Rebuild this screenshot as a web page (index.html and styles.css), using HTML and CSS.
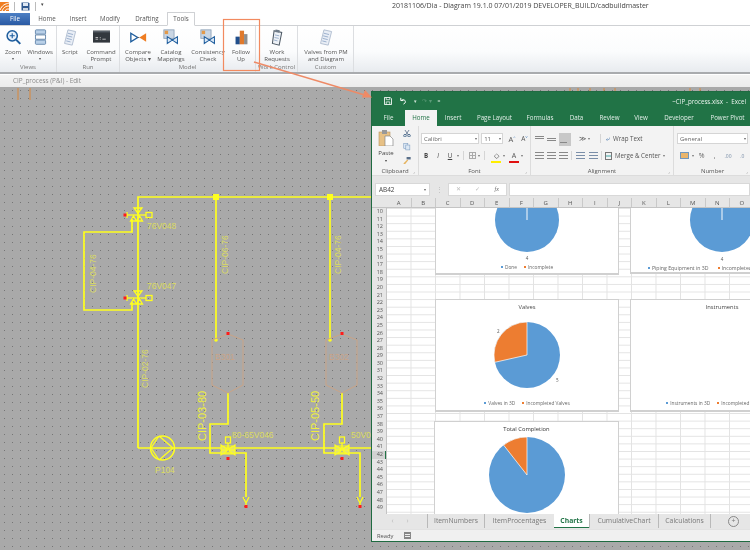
FILE: index.html
```html
<!DOCTYPE html>
<html lang="en">
<head>
<meta charset="utf-8">
<title>Diagram</title>
<link rel="stylesheet" href="styles.css">
</head>
<body>
<div class="app">
  <header class="chrome">
    <div class="titlebar">
      <div class="quick">
        <svg class="logo" viewBox="0 0 9 9"><rect width="9" height="9" fill="#ef7d22"/><path d="M0 8 C2 3 5 2 9 1 M2 9 C4 5 6 4 9 4 M5 9 C6 7 7 7 9 7" stroke="#fff" fill="none"/></svg>
        <span class="qsep"></span>
        <svg class="save" viewBox="0 0 9 9"><path d="M.5.5h7l1 1v7h-8z" fill="#31598f"/><rect x="2" y="1" width="5" height="3" fill="#dfe8f3"/><rect x="2" y="6" width="5" height="2.5" fill="#cdd6e2"/></svg>
        <span class="qsep"></span>
        <span class="qdrop">▾</span>
      </div>
      <div class="apptitle">20181106/Dia - Diagram 19.1.0 07/01/2019 DEVELOPER_BUILD/cadbuildmaster</div>
    </div>
    <nav class="tabs">
      <span class="tab file">File</span>
      <span class="tab t-home">Home</span>
      <span class="tab t-insert">Insert</span>
      <span class="tab t-modify">Modify</span>
      <span class="tab t-drafting">Drafting</span>
      <span class="tab t-tools">Tools</span>
    </nav>
    <div class="ribbon">
      <section class="group g-views">
        <div class="items">
          <div class="item w26"><svg class="ico" viewBox="0 0 20 20"><circle cx="8.5" cy="8" r="6" fill="#e8f1fb" stroke="#1f5e9e" stroke-width="1.8"/><path d="M13 12.5l5 5" stroke="#1f5e9e" stroke-width="2.4"/><path d="M5.5 8h6M8.5 5v6" stroke="#1f5e9e" stroke-width="1.3"/></svg><span>Zoom</span><i>▾</i></div>
          <div class="item w28"><svg class="ico" viewBox="0 0 20 20"><rect x="4" y="1" width="12" height="5" rx="1" fill="#b9d0e8" stroke="#5b7fa6"/><rect x="4" y="7" width="12" height="5" fill="#fff" stroke="#5b7fa6"/><rect x="4" y="13" width="12" height="5" rx="1" fill="#b9d0e8" stroke="#5b7fa6"/></svg><span>Windows</span><i>▾</i></div>
        </div>
        <div class="glabel">Views</div>
      </section>
      <section class="group g-run">
        <div class="items">
          <div class="item w26"><svg class="ico" viewBox="0 0 20 20"><path d="M7 1l9 2-4 16-9-2z" fill="#e9eef6" stroke="#aab8cc"/><path d="M7 5l6 1.500M6 8l6 1.500M5.500 11l6 1.500M5 14l5 1.200" stroke="#8fa6c6"/></svg><span>Script</span></div>
          <div class="item w36"><svg class="ico cmd" viewBox="0 0 20 20"><rect y="2" width="20" height="14" fill="#33383e"/><rect y="2" width="20" height="2" fill="#596068"/><path d="M3 10h3M3 12h3M8 10h1M8 12h1M11 12h4" stroke="#ddd" stroke-width=".9"/></svg><span>Command<br>Prompt</span></div>
        </div>
        <div class="glabel">Run</div>
      </section>
      <section class="group g-model">
        <div class="items">
          <div class="item w36"><svg class="ico" viewBox="0 0 20 20"><path d="M1 5l8 5-8 5z" fill="#fff" stroke="#1f5e9e" stroke-width="1.6"/><path d="M19 5l-8 5 8 5z" fill="#ef7d22"/><path d="M9 10h2" stroke="#555"/></svg><span>Compare<br>Objects ▾</span></div>
          <div class="item w30"><svg class="ico" viewBox="0 0 20 20"><rect x="1" y="1" width="12" height="10" fill="#c9d6e4" stroke="#8ea2b8"/><rect x="2" y="2" width="4" height="4" fill="#e39a4a"/><path d="M5 9l6 4-6 4zM17 9l-6 4 6 4z" fill="#dbe9f7" stroke="#1f5e9e" stroke-width="1.2"/></svg><span>Catalog<br>Mappings</span></div>
          <div class="item w44"><svg class="ico" viewBox="0 0 20 20"><rect x="1" y="1" width="12" height="10" fill="#c9d6e4" stroke="#8ea2b8"/><rect x="2" y="2" width="4" height="4" fill="#e39a4a"/><path d="M5 9l6 4-6 4zM17 9l-6 4 6 4z" fill="#dbe9f7" stroke="#1f5e9e" stroke-width="1.2"/></svg><span>Consistency<br>Check</span></div>
          <div class="item w22"><svg class="ico" viewBox="0 0 20 20"><rect x="3" y="9" width="5" height="9" fill="#1f4e8c"/><rect x="8" y="2" width="5" height="16" fill="#e0792b"/><rect x="13" y="6" width="4" height="12" fill="#8e8e8e"/></svg><span>Follow<br>Up</span></div>
        </div>
        <div class="glabel">Model</div>
      </section>
      <section class="group g-work">
        <div class="items">
          <div class="item w42"><svg class="ico" viewBox="0 0 20 20"><path d="M6 2l9 2-3 15-8-2z" fill="#eef2f7" stroke="#4d5965" stroke-width="1.2"/><rect x="7.500" y="1" width="5" height="3" fill="#6e7b88" transform="rotate(12 10 2)"/><path d="M7 7l5 1M6.500 10l5 1M6 13l4 1" stroke="#8fa6c6"/></svg><span>Work<br>Requests</span></div>
        </div>
        <div class="glabel">Work Control</div>
      </section>
      <section class="group g-custom">
        <div class="items">
          <div class="item w56"><svg class="ico" viewBox="0 0 20 20"><path d="M7 1l9 2-4 16-9-2z" fill="#e9eef6" stroke="#aab8cc"/><path d="M7 5l6 1.500M6 8l6 1.500M5.500 11l6 1.500M5 14l5 1.200" stroke="#8fa6c6"/></svg><span>Valves from PM<br>and Diagram</span></div>
        </div>
        <div class="glabel">Custom</div>
      </section>
    </div>
    <div class="docbar">CIP_process (P&amp;I) - Edit</div>
  </header>

  <main class="canvas">
    <svg class="diagram" viewBox="0 87 750 463" width="750" height="463">
      <defs>
        <pattern id="dots" x="4" y="2" width="8" height="8" patternUnits="userSpaceOnUse">
          <rect width="1" height="1" fill="#757575"/>
        </pattern>
        <g id="gatevalve" fill="none" stroke="#ffff1e" stroke-width="1.300">
          <path d="M-11 0H8" />
          <path d="M-11-3V3" />
          <rect x="8" y="-2.500" width="6" height="5"/>
          <path d="M-4-7H4L0-1.500Z"/>
          <path d="M-7.500 6H-1.500L-4.500 1ZM-1.500 6H4.500L1.500 1Z"/>
          <rect x="-14.500" y="-1.500" width="3" height="3" fill="#ff1a1a" stroke="none"/>
        </g>
        <g id="ctrlvalve">
          <rect x="-2.500" y="-13" width="5" height="6" fill="none" stroke="#ffff1e" stroke-width="1.300"/>
          <path d="M0-7V0" stroke="#ffff1e" stroke-width="1.300"/>
          <path d="M-7-5L-1-1V1L-7 5ZM7-5L1-1V1L7 5ZM-7 0H7M-5 4H5M-5-4H5" fill="#e4e46a" stroke="#ffff1e" stroke-width="1.200"/>
          <rect x="-1.500" y="7" width="3" height="3" fill="#ff1a1a"/>
        </g>
        <g id="drain">
          <path d="M-3 0L0 6L3 0M0 6V8" fill="none" stroke="#ffff1e" stroke-width="1.300"/>
          <rect x="-1.500" y="8" width="3" height="3" fill="#ff1a1a"/>
        </g>
        <g id="vessel">
          <path d="M0 0L15 6V51L0 59L-16 51V6Z" fill="none" stroke="#c9a487" stroke-width="1"/>
          <rect x="-1.500" y="-2" width="3" height="3" fill="#ff1a1a"/>
        </g>
      </defs>
      <rect x="0" y="87" width="750" height="463" fill="url(#dots)"/>
      <path class="mark" d="M18 88V100M30 88V100M570 88V91M578 88V91M590 88V91M604 88V91M615 88V91M690 88V91M700 88V91"/>
      <g class="pipe">
        <path d="M138 448V197H750"/>
        <path d="M216 197V340M330 197V340"/>
        <path d="M132 219V232H84V310H132V302"/>
        <path d="M138 448H371"/>
        <path d="M228 393V424H210V453H246V497"/>
        <path d="M342 393V424H324V453H360V497"/>
      </g>
      <rect class="node" x="213" y="194" width="6" height="6"/>
      <rect class="node" x="327" y="194" width="6" height="6"/>
      <circle class="node" cx="216" cy="340" r="1.800"/>
      <circle class="node" cx="330" cy="340" r="1.800"/>
      <use href="#gatevalve" x="138" y="215"/>
      <use href="#gatevalve" x="138" y="298"/>
      <use href="#vessel" x="228" y="334"/>
      <use href="#vessel" x="342" y="334"/>
      <circle cx="162.500" cy="448" r="12" fill="none" stroke="#ffff1e" stroke-width="1.500"/>
      <path d="M151 448L159 436M151 448L159 460M159 436L173 448L159 460" fill="none" stroke="#ffff1e" stroke-width="1.300"/>
      <use href="#ctrlvalve" x="228" y="450"/>
      <use href="#ctrlvalve" x="342" y="450"/>
      <use href="#drain" x="246" y="497"/>
      <use href="#drain" x="360" y="497"/>
      <text class="lbl" x="147" y="229">76V048</text>
      <text class="lbl" x="147" y="289">76V047</text>
      <text class="lbl" x="155" y="473">P104</text>
      <text class="lbl" x="232" y="438">80-65V046</text>
      <text class="lbl" x="351" y="438">50V0</text>
      <text class="lbl vessel-t" x="215" y="360">B301</text>
      <text class="lbl vessel-t" x="329" y="360">B302</text>
      <text class="lbl" transform="translate(96 293) rotate(-90)">CIP-04-76</text>
      <text class="lbl" transform="translate(228 274) rotate(-90)">CIP-06-76</text>
      <text class="lbl" transform="translate(148 388) rotate(-90)">CIP-02-76</text>
      <text class="lbl" transform="translate(341 274) rotate(-90)">CIP-04-76</text>
      <text class="lbl big" transform="translate(206 441) rotate(-90)">CIP-03-80</text>
      <text class="lbl big" transform="translate(319 441) rotate(-90)">CIP-05-50</text>
    </svg>
  </main>

  <div class="excel">
    <div class="xtitle">
      <div class="xquick">
        <svg class="xs" viewBox="0 0 9 9"><path d="M.5.5h6.500l1.500 1.500v6.500h-8z" fill="none" stroke="#fff"/><path d="M2.500 1v2h4V1M2.500 8.500V5.500h4v3" fill="none" stroke="#fff" stroke-width=".8"/></svg>
        <svg class="xs" viewBox="0 0 9 9"><path d="M2 1v3h3M2.500 4C4 2 8 3 7 6.500L5 8" fill="none" stroke="#fff" stroke-width="1.100"/></svg>
        <span class="dim">▾</span>
        <span class="ghost">↷ ▾</span>
        <span class="dim eq">=</span>
      </div>
      <div class="xname">~CIP_process.xlsx&nbsp; -&nbsp; Excel</div>
    </div>
    <nav class="xtabs">
      <span class="w34">File</span><span class="xactive w32">Home</span><span class="w32">Insert</span><span class="w50">Page Layout</span><span class="w40">Formulas</span><span class="w34">Data</span><span class="w34">Review</span><span class="w30">View</span><span class="w46">Developer</span><span class="w50">Power Pivot</span>
    </nav>
    <div class="xribbon">
      <section class="xg xg-clip">
        <div class="xbody clip">
          <div class="paste"><svg class="pasteico" viewBox="0 0 16 16"><rect x="1" y="2" width="11" height="14" fill="#e7c186" stroke="#b89460" stroke-width=".6"/><rect x="4" y="0" width="5" height="4" fill="#999"/><path d="M7 6h5l3 3v7H7z" fill="#fff" stroke="#888" stroke-width=".7"/></svg><span>Paste</span><i>▾</i></div>
          <div class="clipcol">
            <svg viewBox="0 0 9 9"><path d="M2 0l4 6M7 0L3 6" stroke="#5a6f8a" fill="none"/><circle cx="2" cy="7" r="1.600" fill="none" stroke="#33587f"/><circle cx="7" cy="7" r="1.600" fill="none" stroke="#33587f"/></svg>
            <svg viewBox="0 0 9 9"><rect x=".5" y=".5" width="5" height="6" fill="#dce8f4" stroke="#7d9cc0" stroke-width=".7"/><rect x="3" y="2.500" width="5" height="6" fill="#dce8f4" stroke="#7d9cc0" stroke-width=".7"/></svg>
            <svg viewBox="0 0 9 9"><rect x="4" y="0" width="5" height="3" fill="#5a6f8a"/><path d="M0 8l5-5 1 1-4 5z" fill="#e5b35e"/></svg>
          </div>
        </div>
        <div class="xlabel">Clipboard<b>⌟</b></div>
      </section>
      <section class="xg xg-font">
        <div class="xbody rows">
          <div class="xrow">
            <span class="select s-font">Calibri<i>▾</i></span><span class="select s-size">11<i>▾</i></span>
            <span class="big-a">A<sup>^</sup></span><span class="big-a small">A<sup>v</sup></span>
          </div>
          <div class="xrow r2">
            <b class="fmt">B</b><em class="fmt">I</em><u class="fmt">U</u><span class="tiny">▾</span><span class="vsep"></span><span class="gridico"></span><span class="tiny">▾</span><span class="vsep"></span>
            <span class="fillc">◇<span class="bar yellow"></span></span><span class="tiny">▾</span><span class="fontc">A<span class="bar red"></span></span><span class="tiny">▾</span>
          </div>
        </div>
        <div class="xlabel">Font<b>⌟</b></div>
      </section>
      <section class="xg xg-align">
        <div class="xbody rows">
          <div class="xrow">
            <span class="al a-top"></span><span class="al a-mid"></span><span class="al a-bot"></span>
            <span class="orient">≫</span><span class="tiny">▾</span><span class="vsep vs-wrap"></span>
            <span class="act"><span class="wrapico">⤶</span>Wrap Text</span>
          </div>
          <div class="xrow r2">
            <span class="al l-left"></span><span class="al l-center"></span><span class="al l-right"></span><span class="vsep vs-a"></span>
            <span class="al ind"></span><span class="al ind ind2"></span><span class="vsep vs-b"></span>
            <span class="act"><span class="mergeico"></span>Merge &amp; Center</span><span class="tiny">▾</span>
          </div>
        </div>
        <div class="xlabel">Alignment<b>⌟</b></div>
      </section>
      <section class="xg xg-num">
        <div class="xbody rows">
          <div class="xrow"><span class="select s-gen">General<i>▾</i></span></div>
          <div class="xrow r2 numrow"><span class="cur"></span><span class="tiny">▾</span><span class="pct">%</span><span class="pct">,</span><span class="dec">.00</span><span class="dec">.0</span></div>
        </div>
        <div class="xlabel">Number<b>⌟</b></div>
      </section>
    </div>
    <div class="fbar">
      <span class="namebox">AB42<i>▾</i></span>
      <span class="fgrip">⋮</span>
      <span class="fbtns"><i>✕</i><i>✓</i><i class="fx">fx</i></span>
      <span class="finput"></span>
    </div>
    <div class="colhead">
      <span class="corner"></span><span class="c">A</span><span class="c">B</span><span class="c">C</span><span class="c">D</span><span class="c">E</span><span class="c">F</span><span class="c">G</span><span class="c">H</span><span class="c">I</span><span class="c">J</span><span class="c">K</span><span class="c">L</span><span class="c">M</span><span class="c">N</span><span class="c">O</span>
    </div>
    <div class="sheet">
      <div class="rowhead">
        <span>10</span><span>11</span><span>12</span><span>13</span><span>14</span><span>15</span><span>16</span><span>17</span><span>18</span><span>19</span><span>20</span><span>21</span><span>22</span><span>23</span><span>24</span><span>25</span><span>26</span><span>27</span><span>28</span><span>29</span><span>30</span><span>31</span><span>32</span><span>33</span><span>34</span><span>35</span><span>36</span><span>37</span><span>38</span><span>39</span><span>40</span><span>41</span><span class="cur-row">42</span><span>43</span><span>44</span><span>45</span><span>46</span><span>47</span><span>48</span><span>49</span>
      </div>
      <div class="grid">
        <article class="chart ch1">
          <svg class="pie pie-clip" viewBox="-34 -34 68 68"><circle r="33" fill="#5b9bd5"/><path d="M0 0V-33" stroke="#fff"/></svg>
          <div class="val">4</div>
          <div class="legend"><span class="k kb">Done</span><span class="k ko">Incomplete</span></div>
        </article>
        <article class="chart ch2">
          <svg class="pie pie-clip" viewBox="-34 -34 68 68"><circle r="33" fill="#5b9bd5"/><path d="M0 0V-33" stroke="#fff"/></svg>
          <div class="val">4</div>
          <div class="legend"><span class="k kb">Piping Equipment in 3D</span><span class="k ko">Incompleted Piping Equipment</span></div>
        </article>
        <article class="chart ch3">
          <h3>Valves</h3>
          <svg class="pie3" viewBox="-91 -33 183 67"><circle r="33" fill="#5b9bd5"/><path d="M0 0L-32.200 7.300A33 33 0 0 1 0-33Z" fill="#ed7d31" stroke="#fff" stroke-width=".7"/><text class="dl" x="-30" y="-22.500">2</text><text class="dl" x="29" y="26.500">5</text></svg>
          <div class="legend"><span class="k kb">Valves in 3D</span><span class="k ko">Incompleted Valves</span></div>
        </article>
        <article class="chart ch4">
          <h3>Instruments</h3>
          <div class="spacer"></div>
          <div class="legend"><span class="k kb">Instruments in 3D</span><span class="k ko">Incompleted Instruments</span></div>
        </article>
        <article class="chart ch5">
          <h3 class="bold">Total Completion</h3>
          <svg class="pie5" viewBox="-39 -39 78 78"><circle r="38" fill="#5b9bd5"/><path d="M0 0L-23.400-29.900A38 38 0 0 1 0-38Z" fill="#ed7d31" stroke="#fff" stroke-width=".7"/></svg>
        </article>
      </div>
    </div>
    <div class="sheettabs">
      <span class="nav">‹</span><span class="nav">›</span>
      <span class="st w57">ItemNumbers</span><span class="st w70">ItemProcentages</span><span class="st active">Charts</span><span class="st w69">CumulativeChart</span><span class="st w53">Calculations</span>
      <span class="plus">+</span>
    </div>
    <footer class="status"><span>Ready</span><span class="macro"></span></footer>
  </div>

  <svg class="callout" viewBox="0 0 750 550" width="750" height="550">
    <rect x="223.500" y="19.500" width="36" height="51" fill="none" stroke="#f28a5f" stroke-width="1.200"/>
    <path d="M254 62L368 96" stroke="#ee8a66" stroke-width="1.500"/>
    <path d="M372 97.500L362 97.500L365 90Z" fill="#ee8a66"/>
  </svg>
</div>
</body>
</html>
```
FILE: styles.css
```css
html, body { margin: 0; height: 100%; overflow: hidden; background: #a9a9a9; }
.app { position: relative; width: 750px; height: 550px; overflow: hidden; display: flex; flex-direction: column; font-family: "Open Sans", "Liberation Sans", sans-serif; color: #444; }

/* host application chrome */
.chrome { flex: none; height: 87px; display: flex; flex-direction: column; background: #fff; filter: blur(.3px); }
.titlebar { height: 13px; display: flex; align-items: center; }
.quick { width: 392px; display: flex; align-items: center; gap: 5px; padding-top: 1px; }
.logo { width: 9px; height: 9px; }
.save { width: 9px; height: 9px; margin-left: 1px; }
.qsep { width: 1px; height: 9px; background: #bbb; }
.qdrop { font-size: 5px; color: #444; margin-top: -5px; }
.apptitle { font-size: 7px; color: #444; white-space: nowrap; margin-top: -2px; }
.tabs { height: 12px; display: flex; border-bottom: 1px solid #cfd1d4; background: #fff; }
.tab { font-size: 6.200px; line-height: 12px; text-align: center; color: #555; }
.file { width: 30px; background: linear-gradient(#4c7fc4, #2a5aa3); color: #fff; }
.t-home { width: 34px; }
.t-insert { width: 28px; }
.t-modify { width: 36px; }
.t-drafting { width: 40px; margin-left: -1px; }
.t-tools { width: 26px; background: #fff; border: 1px solid #cfd1d4; border-bottom: 1px solid #fff; margin-top: -1px; height: 12px; border-radius: 1px 1px 0 0; }
.ribbon { height: 46px; display: flex; background: linear-gradient(#fff 0%, #fbfcfd 55%, #e8ebef 100%); border-bottom: 2px solid #a9abae; }
.group { display: flex; flex-direction: column; border-right: 1px solid #dcdee1; box-sizing: border-box; }
.g-views { width: 57px; }
.g-run { width: 63px; }
.g-model { width: 136px; }
.g-work { width: 42px; }
.g-custom { width: 56px; }
.items { flex: 1; display: flex; }
.glabel { height: 9px; line-height: 8px; font-size: 6px; text-align: center; color: #777; white-space: nowrap; }
.item { flex: none; display: flex; flex-direction: column; align-items: center; padding-top: 3px; font-size: 6px; line-height: 7px; text-align: center; white-space: nowrap; color: #555; }
.item i { font-style: normal; font-size: 4px; line-height: 6px; }
.ico { width: 17px; height: 17px; margin-bottom: 3px; flex: none; }
.cmd { width: 17px; }
.w26 { width: 26px; } .w28 { width: 28px; } .w36 { width: 36px; } .w30 { width: 30px; } .w44 { width: 44px; } .w22 { width: 22px; } .w42 { width: 42px; } .w56 { width: 56px; }
.docbar { height: 13px; margin-top: 1px; padding-left: 13px; font-size: 6.400px; line-height: 12px; color: #8a8a8a; background: linear-gradient(#f4f4f4, #ececec); box-sizing: border-box; }

/* free diagram canvas */
.canvas { flex: 1; min-height: 0; background-color: #a9a9a9; overflow: hidden; }
.diagram { display: block; }
.pipe { fill: none; stroke: #ffff1e; stroke-width: 1.700; }
.node { fill: #ffff1e; }
.mark { stroke: #e8811f; stroke-width: .8; fill: none; }
.lbl { font-family: "Liberation Sans", sans-serif; font-size: 8.500px; fill: #dcdc60; }
.big { font-size: 11px; fill: #f0f03a; }
.vessel-t { fill: #c9a487; }

/* Excel window floating on the desktop */
.excel { position: absolute; left: 371px; top: 91px; width: 379px; height: 451px; box-sizing: border-box; border: 1px solid #1f6b41; border-right: 0; background: #f3f3f3; display: flex; flex-direction: column; overflow: hidden; filter: blur(.3px); }
.xtitle { flex: none; height: 18px; background: #217346; color: #fff; display: flex; justify-content: space-between; align-items: center; font-size: 6px; }
.xquick { display: flex; align-items: center; gap: 3px; padding-left: 12px; }
.xs { width: 8px; height: 8px; margin-right: 4px; }
.dim { color: #cfe3d7; font-size: 5px; }
.ghost { color: #5b9a77; font-size: 6px; margin-left: 2px; }
.eq { margin-left: 3px; }
.xname { padding-right: 4px; font-size: 6.200px; color: #e9f2ed; white-space: nowrap; }
.xtabs { flex: none; height: 16px; background: #217346; display: flex; align-items: stretch; color: #e2eee8; font-size: 6.200px; line-height: 16px; text-align: center; white-space: nowrap; }
.xtabs span { flex: none; }
.xactive { background: #f3f3f3; color: #217346; }
.w34 { width: 33px; } .w32 { width: 32px; } .w50 { width: 51px; } .w40 { width: 40px; } .w46 { width: 46px; } .w30 { width: 30px; }
.xribbon { flex: none; height: 50px; display: flex; background: #f3f3f3; border-bottom: 1px solid #dcdcdc; box-sizing: border-box; }
.xg { display: flex; flex-direction: column; border-right: 1px solid #dcdcdc; box-sizing: border-box; flex: none; }
.xg-clip { width: 47px; }
.xg-font { width: 112px; }
.xg-align { width: 143px; }
.xg-num { width: 77px; border-right: 0; }
.xbody { flex: 1; min-height: 0; }
.xlabel { height: 11px; line-height: 15px; text-align: center; font-size: 6px; color: #555; position: relative; }
.xlabel b { position: absolute; right: 3px; top: 0; font-weight: 400; font-size: 4px; color: #888; }
.clip { display: flex; padding-left: 5px; gap: 3px; }
.paste { width: 18px; display: flex; flex-direction: column; align-items: center; padding-top: 4px; font-size: 6px; line-height: 7px; color: #444; }
.paste i { font-style: normal; font-size: 4px; }
.pasteico { width: 16px; height: 16px; margin-bottom: 4px; }
.clipcol { display: flex; flex-direction: column; gap: 6px; padding: 4px 0 0 5px; }
.clipcol svg { width: 8px; height: 8px; display: block; }
.rows { display: flex; flex-direction: column; padding: 7px 0 0 2px; }
.xrow { display: flex; align-items: center; height: 11px; gap: 2px; white-space: nowrap; font-size: 6.200px; color: #555; }
.r2 { margin-top: 6px; }
.select { height: 11px; line-height: 10px; background: #fff; border: 1px solid #d5d5d5; box-sizing: border-box; padding-left: 2px; display: flex; justify-content: space-between; font-size: 6px; color: #666; }
.select i { font-style: normal; font-size: 4px; padding-right: 1px; color: #666; }
.s-font { width: 60px; }
.s-size { width: 22px; }
.s-gen { width: 71px; margin-left: 1px; }
.big-a { font-size: 7.500px; margin-left: 4px; color: #555; width: 9px; }
.small { font-size: 6.500px; margin-left: 2px; }
.big-a sup { font-size: 4px; color: #3a77b8; line-height: 0; }
.fmt { width: 10px; text-align: center; font-style: normal; font-size: 6.200px; color: #444; }
em.fmt { font-style: italic; }
.tiny { font-size: 4px; color: #777; }
.vsep { width: 1px; height: 9px; background: #d5d5d5; margin: 0 2px; }
.gridico { width: 7px; height: 7px; border: 1px solid #aaa; background: linear-gradient(#aaa, #aaa) center/1px 100% no-repeat, linear-gradient(#aaa, #aaa) center/100% 1px no-repeat; box-sizing: border-box; margin-left: 1px; }
.fillc, .fontc { width: 10px; text-align: center; position: relative; font-size: 7px; line-height: 8px; margin-left: 2px; }
.bar { position: absolute; left: 0; right: 0; bottom: -3px; height: 2px; }
.yellow { background: #ffee00; }
.red { background: #e01010; }
.xg-align .rows { padding-left: 4px; }
.al { width: 9px; height: 8px; flex: none; margin-right: 1px; background-repeat: no-repeat; }
.a-top { background: linear-gradient(#888, #888) 0 1px/9px 1px no-repeat, linear-gradient(#888, #888) 0 3px/9px 1px no-repeat; }
.a-mid { background: linear-gradient(#888, #888) 0 3px/9px 1px no-repeat, linear-gradient(#888, #888) 0 5px/9px 1px no-repeat; }
.a-bot { background: #c8c8c8 linear-gradient(#888, #888) 1px 9px/7px 1px no-repeat; width: 12px; height: 13px; margin-top: 1px; }
.l-left, .l-center, .l-right { background-image: repeating-linear-gradient(#888 0 1px, transparent 1px 3px); }
.ind { background-image: repeating-linear-gradient(#7a8ea8 0 1px, transparent 1px 3px); width: 9px; margin-left: 1px; }
.orient { font-size: 7px; color: #555; margin-left: 5px; }
.vs-wrap { margin-left: 8px; margin-right: 3px; }
.vs-a { margin: 0 1px 0 0; }
.vs-b { margin: 0 1px 0 0; }
.act { display: inline-flex; align-items: center; gap: 3px; font-size: 6.200px; color: #555; }
.wrapico { color: #3c6fa8; font-size: 7px; }
.mergeico { width: 7px; height: 8px; border: 1px solid #777; box-sizing: border-box; background: linear-gradient(#9cc, #9cc) center/100% 2px no-repeat; }
.numrow { gap: 3px; padding-left: 4px; }
.cur { width: 9px; height: 7px; background: #e8b56d; border: 1px solid #6f97bf; box-sizing: border-box; }
.pct { font-size: 7px; width: 10px; text-align: center; color: #666; }
.dec { font-size: 5px; width: 11px; color: #7a8ea8; margin-left: 2px; }
.fbar { flex: none; height: 21px; background: #e6e6e6; display: flex; align-items: center; padding-left: 3px; padding-top: 5px; box-sizing: border-box; }
.namebox { width: 55px; height: 13px; line-height: 12px; background: #fff; border: 1px solid #d8d8d8; box-sizing: border-box; padding-left: 3px; font-size: 6.400px; color: #444; display: flex; justify-content: space-between; }
.namebox i { font-style: normal; font-size: 4px; padding-right: 3px; color: #666; }
.fgrip { width: 18px; text-align: center; font-size: 7px; color: #bbb; }
.fbtns { width: 59px; height: 13px; background: #fff; border: 1px solid #d8d8d8; box-sizing: border-box; display: flex; justify-content: space-around; align-items: center; font-size: 6px; color: #bbb; }
.fbtns i { font-style: normal; }
.fbtns .fx { font-family: "Liberation Serif", serif; font-style: italic; color: #666; }
.finput { flex: 1; height: 13px; background: #fff; border: 1px solid #d8d8d8; box-sizing: border-box; margin-left: 2px; }
.colhead { flex: none; height: 11px; background: #e6e6e6; display: flex; padding-top: 1px; box-sizing: border-box; border-bottom: 1px solid #c4c4c4; }
.corner { width: 15px; flex: none; }
.c { flex: none; width: 24.500px; text-align: center; font-size: 6px; line-height: 11px; color: #555; border-right: 1px solid #c9c9c9; box-sizing: border-box; }
.sheet { flex: none; height: 306px; display: flex; background: #fff; overflow: hidden; }
.rowhead { flex: none; width: 15px; background: #e6e6e6; border-right: 1px solid #c4c4c4; box-sizing: border-box; display: flex; flex-direction: column; }
.rowhead span { flex: none; height: 7.600px; line-height: 7.600px; font-size: 5.500px; text-align: right; padding-right: 3px; color: #555; }
.cur-row { background: #d2d2d2; box-shadow: inset -1px 0 #217346; color: #217346; }
.grid { position: relative; flex: 1; background-color: #fff; background-image: linear-gradient(90deg, #e3e3e3 1px, transparent 1px), linear-gradient(#e3e3e3 1px, transparent 1px); background-size: 24.500px 7.600px; background-position: 23.500px 0; }
.chart { position: absolute; width: 184px; box-sizing: border-box; background: #fff; border: 1px solid #d0d0d0; border-bottom-width: 2px; display: flex; flex-direction: column; align-items: center; overflow: hidden; color: #555; }
.chart h3 { margin: 0; font-size: 5.800px; font-weight: 400; line-height: 7px; padding-top: 4px; color: #444; flex: none; }
.chart h3.bold { color: #333; padding-top: 4px; }
.ch1 { left: 48px; top: -1px; height: 68px; }
.ch2 { left: 243px; top: -1px; height: 67px; }
.ch3 { left: 48px; top: 91px; height: 113px; }
.ch4 { left: 243px; top: 91px; height: 113px; }
.ch5 { left: 47px; top: 213px; height: 98px; width: 185px; }
.pie-clip { width: 66px; height: 66px; flex: none; margin-top: -21px; }
.val { font-size: 4.500px; line-height: 6px; margin-top: 2px; flex: none; }
.legend { display: flex; gap: 7px; font-size: 4.800px; line-height: 6px; margin-top: 3px; white-space: nowrap; flex: none; color: #666; }
.ch2 .legend { font-size: 5.200px; gap: 9px; }
.ch2 .val { margin-top: 3px; }
.k { display: flex; align-items: center; gap: 2px; }
.k::before { content: ""; width: 2px; height: 2px; flex: none; }
.kb::before { background: #5b9bd5; }
.ko::before { background: #ed7d31; }
.pie3 { width: 183px; height: 67px; margin-top: 11px; flex: none; }
.dl { font-size: 4.500px; fill: #555; font-family: "Open Sans", sans-serif; }
.ch3 .legend, .ch4 .legend { margin-top: 11px; }
.spacer { height: 67px; margin-top: 11px; flex: none; }
.pie5 { width: 78px; height: 78px; margin-top: 3px; flex: none; }
.sheettabs { flex: none; height: 15px; display: flex; align-items: stretch; background: #e6e6e6; font-size: 6.800px; color: #777; padding-left: 13px; white-space: nowrap; box-sizing: border-box; }
.nav { width: 15px; text-align: center; color: #bbb; line-height: 14px; font-size: 7px; flex: none; }
.st { line-height: 14px; height: 14px; text-align: center; flex: none; box-sizing: border-box; border-left: 1px solid #b9b9b9; margin: 0; }
.w57 { width: 57px; margin-left: 12px; } .w70 { width: 70px; } .w69 { width: 69px; } .w53 { width: 53px; border-right: 1px solid #b9b9b9; }
.active { width: 35px; background: #fff; color: #217346; font-weight: 700; border-left: 0; box-shadow: inset 0 -1px #217346; }
.plus { margin-left: 17px; width: 9px; height: 9px; margin-top: 2px; border: 1px solid #888; border-radius: 50%; text-align: center; line-height: 8px; font-size: 7px; flex: none; }
.status { flex: 1; background: #f0f0f0; display: flex; align-items: center; gap: 10px; padding-left: 5px; font-size: 5.800px; color: #555; border-top: 1px solid #e2e2e2; }
.macro { width: 7px; height: 7px; border: 1px solid #888; box-sizing: border-box; background: repeating-linear-gradient(#888 0 1px, transparent 1px 2px); }

/* annotation drawn on top of the screenshot */
.callout { position: absolute; left: 0; top: 0; pointer-events: none; }
```
